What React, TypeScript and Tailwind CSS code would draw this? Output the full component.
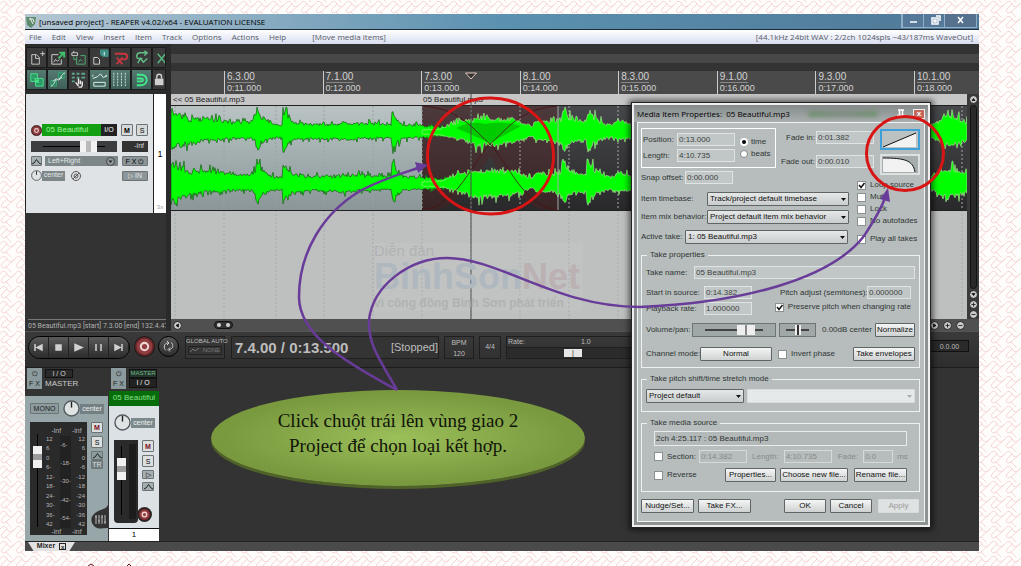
import React from 'react';
import { clsx } from 'clsx';

const MENU = ['File', 'Edit', 'View', 'Insert', 'Item', 'Track', 'Options', 'Actions', 'Help'];

const TICKS = [
  ['6.3.00', '0:11.000'],
  ['7.1.00', '0:12.000'],
  ['7.3.00', '0:13.000'],
  ['8.1.00', '0:14.000'],
  ['8.3.00', '0:15.000'],
  ['9.1.00', '0:16.000'],
  ['9.3.00', '0:17.000'],
  ['10.1.00', '0:18.000'],
];

// [x, height above centre, depth below centre] of the audio peaks
type Peak = [number, number, number];

const FIRST_ITEM: Peak[] = [
  [0, 24, 20], [8, 18, 15], [20, 13, 12], [34, 15, 9], [50, 12, 8], [62, 10, 7], [80, 11, 7], [84, 15, 10],
  [86, 25, 21], [90, 18, 12], [97, 9, 8], [109, 7, 6], [111, 8, 6], [112, 24, 21], [116, 18, 14], [122, 10, 9],
  [140, 8, 7], [166, 8, 8], [172, 10, 9], [192, 9, 7], [220, 8, 6], [222, 24, 22], [226, 14, 12], [232, 8, 7],
  [251, 7, 6], [290, 4, 3], [387, 2, 2],
];

const SECOND_ITEM: Peak[] = [
  [251, 2, 2], [270, 3, 3], [280, 8, 6], [292, 12, 9], [306, 14, 15], [320, 14, 14], [344, 14, 11], [354, 9, 7],
  [362, 6, 4], [366, 12, 9], [380, 10, 8], [390, 12, 12], [393, 24, 21], [398, 16, 12], [410, 10, 8], [415, 12, 9],
  [417, 24, 22], [422, 17, 13], [432, 9, 7], [441, 7, 6], [448, 13, 8], [460, 8, 6], [520, 9, 7], [620, 12, 10],
  [750, 7, 5], [762, 8, 6], [772, 14, 14], [782, 16, 14], [796, 11, 9],
];

function wavePath(peaks: Peak[], centre: number, seed: number) {
  let s = seed;
  const rand = () => {
    s = (s * 16807) % 2147483647;
    return s / 2147483647;
  };
  // mostly small ripple, with a taller hair now and then
  const ripple = () => 0.72 + 0.36 * rand() + (rand() > 0.86 ? 0.4 : 0);
  const top: string[] = [];
  const bottom: string[] = [];
  const end = peaks[peaks.length - 1][0];
  let k = 0;
  for (let x = peaks[0][0]; x <= end; x += 1) {
    while (k < peaks.length - 2 && peaks[k + 1][0] < x) k += 1;
    const [x0, u0, d0] = peaks[k];
    const [x1, u1, d1] = peaks[k + 1];
    const f = (x - x0) / (x1 - x0);
    const up = Math.min(25, (u0 + (u1 - u0) * f) * ripple());
    const down = Math.min(24, (d0 + (d1 - d0) * f) * ripple());
    top.push(`${x} ${(centre - up).toFixed(1)}`);
    bottom.unshift(`${x} ${(centre + down).toFixed(1)}`);
  }
  return `M${top.join('L')}L${bottom.join('L')}Z`;
}

const GRID = [4, 53, 105, 153, 202, 251, 300, 349, 398, 447, 496, 546, 595, 644, 693, 743, 791];

function Arrange() {
  return (
    <svg viewBox="0 0 796 225" preserveAspectRatio="none" className="block h-[225px] w-full">
      <defs>
        <linearGradient id="lightItem" x2="0" y2="1">
          <stop offset="0" stopColor="#b9c3c4" />
          <stop offset="1" stopColor="#8a9698" />
        </linearGradient>
        <linearGradient id="darkItem" x2="0" y2="1">
          <stop offset="0" stopColor="#47484b" />
          <stop offset="1" stopColor="#29292b" />
        </linearGradient>
      </defs>
      <rect width="796" height="225" fill="#bec0c0" />
      <rect width="796" height="12" fill="#c6c6c6" />
      <rect y="12" width="251" height="104" fill="url(#lightItem)" />
      <rect x="251" y="12" width="545" height="104" fill="url(#darkItem)" />
      {/* Crossfade shading */}
      <path
        d="M251 12H387V116H370C350 108 334 88 319 62C304 88 288 108 268 116H251Z"
        fill="#5a1c1c"
        opacity="0.32"
      />
      {GRID.map((x) => (
        <g key={x} strokeDasharray="2 2">
          <line x1={x} x2={x} y1="116" y2="225" stroke="#a6aaaa" />
          <line x1={x} x2={x} y1="12" y2="116" stroke={x > 251 ? '#a5a5a5' : '#98a2a3'} />
        </g>
      ))}
      <path d={wavePath(FIRST_ITEM, 38, 11)} fill="#00ff00" stroke="#1f6a1f" strokeWidth="0.8" />
      <path d={wavePath(FIRST_ITEM, 90, 29)} fill="#00ff00" stroke="#1f6a1f" strokeWidth="0.8" />
      <path d={wavePath(SECOND_ITEM, 38, 47)} fill="#00ff00" stroke="#b4e89a" strokeWidth="0.6" />
      <path d={wavePath(SECOND_ITEM, 90, 83)} fill="#00ff00" stroke="#b4e89a" strokeWidth="0.6" />
      <path d="M285 34Q300 26 314 30Q330 26 350 32L319 49Z" fill="#00a800" opacity="0.6" />
      <g fill="none" stroke="#4a1212" strokeWidth="0.8">
        <path d="M251 12C290 14 304 38 319 50C338 70 352 112 387 116" />
        <path d="M387 12C348 14 334 38 319 50C300 70 286 112 251 116" />
      </g>
      <line x1="387" x2="387" y1="12" y2="116" stroke="#a8a8a8" />
      <path d="M0 11.5H796M0 116.5H796" stroke="#222" />
      <line x1="300" x2="300" y1="0" y2="225" stroke="#4a4a4a" />
    </svg>
  );
}

const TOOL_ICONS: { on?: boolean; art: React.ReactNode }[] = [
  { art: <path d="M5 7h5l3 3v7H5zM14 6h5M16.500 3.500v5M9 7v4h4" stroke="#c9c9c9" /> },
  {
    art: (
      <>
        <path d="M4 7h7M4 7v10h10v-5M6 15l2-3 2 2 2-2" stroke="#d0d0d0" />
        <path d="M11 11l5-5M12 5h5v5" stroke="#3fc46b" strokeWidth="2" />
      </>
    ),
  },
  {
    art: (
      <>
        <path d="M3 5h6v3H3zM5 3v2" stroke="#c9c9c9" />
        <path d="M8 9v8h9V8h-5M10 15l2-3 2 2M8 12H5V9" stroke="#4fae74" />
      </>
    ),
  },
  {
    art: (
      <>
        <path d="M4 10h4l2 2v5H4z" stroke="#d0d0d0" />
        <path d="M11 2h8v7h-5l-3-2z" fill="#3f8f86" stroke="#3f8f86" />
        <path d="M15 4v4" stroke="#d8fff4" />
      </>
    ),
  },
  { art: <path d="M4 6h10c4 0 4 6 0 6h-3M6 10l6 7M12 10l-6 7" stroke="#c8373f" strokeWidth="2" /> },
  { art: <path d="M15 5H9c-5 0-5 6-2 6h4M13 3l3 2-3 3M6 16l3-5 3 4 4-4" stroke="#62bf88" strokeWidth="1.500" /> },
  { art: <path d="M5 6l9 11M14 5L5 16M14 5l5 11" stroke="#58b983" strokeWidth="1.500" /> },
  { on: true, art: <path d="M4 4h7v8H4zM9 9h8v8H9zM7 8l5 5M12 10v3H9" stroke="#4be38a" fill="#2b9a66" /> },
  {
    on: true,
    art: (
      <>
        <path d="M3 11h6v6H3zM11 3h6v6h-6z" stroke="#3aa877" fill="#2f8062" />
        <path d="M3 17C8 15 6 11 10 10S13 5 18 3M5 12l4-3M11 11l4-4" stroke="#e2efe9" />
      </>
    ),
  },
  {
    art: (
      <>
        <path d="M3 4h3M8 4h3M13 4h4M3 8h3M8 8h3M13 8h4M3 12h3" stroke="#5ca68a" strokeWidth="2" />
        <path d="M10 17l-3-4M10 9v6M12 11v4M14 12v4l-1 2h-3" stroke="#e8e8e8" strokeWidth="1.500" />
      </>
    ),
  },
  { on: true, art: <path d="M3 9l5-2 3-3 3 4 4-2M4 13h12v4H4zM3 5v2M17 5v2" stroke="#e2f4ee" /> },
  { on: true, art: <path d="M3 3v15M7 3v15M11 3v15M15 3v15" stroke="#cfe6de" strokeDasharray="2 1" /> },
  { on: true, art: <path d="M5 5h5a5 5 0 0 1 0 11H5M5 9h5a1.500 1.500 0 0 1 0 3H5" stroke="#42e88c" strokeWidth="2" /> },
  {
    art: (
      <>
        <rect x="2" y="9" width="9" height="7" fill="#cfcfcf" stroke="none" />
        <path d="M4 9V7a2.500 2.500 0 0 1 5 0v2" stroke="#cfcfcf" strokeWidth="1.500" />
      </>
    ),
  },
];

function Toolbar() {
  return (
    <div className="grid h-[50px] grid-cols-[repeat(6,21px)_14px] grid-rows-[21px_21px] gap-y-px overflow-hidden bg-[#2c2c2c] pt-[3px] pl-px">
      {TOOL_ICONS.map((tool, i) => (
        <button
          key={i}
          className={clsx(
            'overflow-hidden border border-[#1c1c1c]',
            tool.on ? 'bg-gradient-to-b from-[#557a72] to-[#3e5f58]' : 'bg-[#3a3a3a]',
          )}
        >
          <svg width="19" height="19" viewBox="0 0 20 20" fill="none">
            {tool.art}
          </svg>
        </button>
      ))}
    </div>
  );
}

function Chip({ children, className }: { children: React.ReactNode; className?: string }) {
  return (
    <button
      className={clsx(
        'flex items-center justify-center rounded-[1px] border border-[#6d7374] text-[7px] leading-none',
        className,
      )}
    >
      {children}
    </button>
  );
}

function EnvIcon() {
  return (
    <svg width="9" height="7" viewBox="0 0 9 7" fill="none" stroke="#1f2526">
      <path d="M0 6l2-1 2.500-3.500L7 5l2 1" />
    </svg>
  );
}

function RecIcon({ size }: { size: number }) {
  return (
    <svg width={size} height={size} viewBox="0 0 20 20">
      <circle cx="10" cy="10" r="9.500" fill="#6e2527" stroke="#1d1d1d" />
      <circle cx="10" cy="10" r="7.500" fill="#8f3f42" />
      <circle cx="10" cy="10" r="3.500" fill="none" stroke="#f0d5d0" strokeWidth="2" />
    </svg>
  );
}

function Knob({ size }: { size: number }) {
  return (
    <svg width={size} height={size} viewBox="0 0 18 18">
      <circle cx="9" cy="9" r="8" fill="#dfe3e4" stroke="#565d5f" strokeWidth="1.500" />
      <path d="M9 2v6" stroke="#222" strokeWidth="1.500" />
    </svg>
  );
}

function TrackPanel() {
  return (
    <div className="flex h-[119px] border-l border-[#222] bg-[#dfe3e5]">
      <div className="flex flex-1 flex-col gap-1 px-[5px] pt-[30px]">
        <div className="flex h-3 items-center">
          <RecIcon size={11} />
          <input
            aria-label="Track name"
            defaultValue="05 Beautiful"
            className="h-3 w-[59px] bg-[#12a012] pl-1 text-[8px] text-[#a8f0a0]"
          />
          <button className="h-3 w-4 bg-[#222] text-[7px] text-white">I/O</button>
          <Chip className="ml-1 h-3 w-3 bg-[#d5d8d8] font-bold">M</Chip>
          <Chip className="ml-[3px] h-3 w-3 bg-[#d5d8d8]">S</Chip>
        </div>
        <div className="flex h-3 items-center justify-between">
          <div className="flex h-[11px] w-[86px] items-center bg-[#3b3d3e] px-3">
            <div className="flex h-px w-full items-center justify-end bg-black pr-2">
              <div className="h-[11px] w-[17px] border-x-[6px] border-[#f2f2f2] bg-[#b9b9b9]" />
            </div>
          </div>
          <div className="flex h-[11px] w-[26px] items-center justify-end bg-[#333] pr-1 text-[7px] text-[#ddd]">
            -inf
          </div>
        </div>
        <div className="flex h-[10px] items-center">
          <Chip className="h-[10px] w-[11px] bg-[#a5aeb0]">
            <EnvIcon />
          </Chip>
          <div className="ml-[3px] flex h-[10px] w-[73px] items-center justify-between bg-[#7d8789] px-[3px] text-[7px] text-[#e3e8e8]">
            Left+Right
            <svg width="9" height="9" viewBox="0 0 9 9">
              <circle cx="4.500" cy="4.500" r="4" fill="#8f999b" stroke="#444" />
              <path d="M2.500 3.500h4l-2 2.500z" fill="#222" />
            </svg>
          </div>
          <Chip className="ml-1 h-[10px] w-[26px] bg-[#8c9698]">F X ⏻</Chip>
        </div>
        <div className="flex h-[11px] items-center">
          <Knob size={11} />
          <span className="flex h-[10px] w-[23px] items-center justify-center bg-[#7d8789] text-[7px] text-[#e3e8e8]">
            center
          </span>
          <svg width="10" height="10" viewBox="0 0 10 10" className="ml-[6px]" fill="none" stroke="#555">
            <circle cx="5" cy="5" r="4.500" />
            <circle cx="5" cy="5" r="2" />
            <path d="M2 8l6-6" />
          </svg>
          <Chip className="ml-[41px] h-[10px] w-[26px] bg-[#8c9698] text-[#e3e8e8]">▷ IN</Chip>
        </div>
      </div>
      <div className="flex w-[13px] flex-col items-center border-l border-[#222] bg-white pt-[54px] text-[9px] leading-3">
        1<span className="mt-auto text-[6px] text-[#999]">3x</span>
      </div>
    </div>
  );
}

function RoundButton({ d }: { d: string }) {
  return (
    <button className="block">
      <svg width="9" height="9" viewBox="0 0 9 9">
        <circle cx="4.500" cy="4.500" r="4" fill="#c9c9c9" stroke="#222" />
        <path d={d} fill="#111" stroke="#111" strokeWidth="0.8" />
      </svg>
    </button>
  );
}

function Timeline() {
  return (
    <section className="min-w-0 flex-1">
      <div className="h-[10px] bg-[#333]" />
      <div className="h-[9px] bg-[#484848]" />
      <div className="h-2 bg-[#333]" />
      <div className="relative grid h-[23px] grid-cols-[repeat(7,1fr)_65px] bg-[#4a4a4a] pl-[53px]">
        {TICKS.map(([beat, time]) => (
          <div key={beat} className="border-l border-[#ccc] pt-px pl-[2px] text-[#d2d2d2]">
            <div className="w-7 border-b border-[#888] text-[10px] leading-[10px] whitespace-nowrap">{beat}</div>
            <div className="text-[9px] leading-[10px]">{time}</div>
          </div>
        ))}
        <svg width="12" height="8" viewBox="0 0 12 8" className="absolute top-px left-[294px]" fill="#333" stroke="#e8c8c0">
          <path d="M.5 1h11L6 7z" />
        </svg>
      </div>
      <div className="flex bg-[#3a3a3a]">
        <div className="relative min-w-0 flex-1">
          <Arrange />
          <div className="absolute inset-x-0 top-0 flex text-[8px] leading-3 text-[#222]">
            <span className="w-[252px] pl-[2px]">&lt;&lt; 05 Beautiful.mp3</span>
            <span>05 Beautiful.mp3</span>
          </div>
          <div className="absolute top-[149px] left-[203px] w-[209px] bg-white/5 font-bold whitespace-nowrap text-[#b0b2b2]">
            <p className="text-[15px] leading-4 font-normal">Diễn đàn</p>
            <p className="text-[36px] leading-9 text-[#afb8be]">
              BinhSon<span className="text-[#bbb0b2]">Net</span>
            </p>
            <p className="text-[12px] leading-4">vì công đồng Bình Sơn phát triển</p>
          </div>
        </div>
        <div className="flex w-3 flex-col items-center gap-px pt-px">
          <RoundButton d="M3 5.500h3L4.500 3.500z" />
          <div className="w-[7px] flex-1 rounded-full border border-[#111] bg-[#292929]" />
          <RoundButton d="M3 3.500h3L4.500 5.500z" />
          <RoundButton d="M2.500 4.500h4M4.500 2.500v4" />
          <RoundButton d="M2.500 4.500h4" />
        </div>
      </div>
      <div className="flex h-3 items-center bg-[#505050] px-[2px]">
        <RoundButton d="M5.500 3v3L3 4.500z" />
        <div className="ml-8 flex h-2 w-[19px] items-center justify-around rounded-full border border-[#111] bg-[#333]">
          <i className="size-1 rounded-full bg-[#d5d5d5]" />
          <i className="size-1 rounded-full bg-[#d5d5d5]" />
        </div>
        <div className="mr-3 ml-auto flex gap-1">
          <RoundButton d="M3.500 3v3L6 4.500z" />
          <RoundButton d="M2.500 4.500h4M4.500 2.500v4" />
          <RoundButton d="M2.500 4.500h4" />
        </div>
      </div>
    </section>
  );
}

const TRANSPORT = [
  'M5 3v7M12 4v5L7 6.500z',
  'M6 4h5v5H6z',
  'M5 3.500v6L12 6.500z',
  'M6 3v7M11 3v7',
  'M12 3v7M5 4v5l5-2.500z',
];

function Transport() {
  return (
    <section className="flex h-9 items-start overflow-hidden border-t border-[#555] bg-gradient-to-b from-[#3a3a3a] to-[#2e2e2e] pt-1 pl-[3px] text-[#bdbdbd]">
      <div className="flex overflow-hidden rounded-full border border-black">
        {TRANSPORT.map((d) => (
          <button
            key={d}
            className="flex h-[21px] w-5 items-center justify-center border-r border-[#222] bg-gradient-to-b from-[#5a5a5a] to-[#2d2d2d]"
          >
            <svg width="17" height="13" viewBox="0 0 17 13" fill="#d0d0d0" stroke="#d0d0d0" strokeWidth="1.500">
              <path d={d} />
            </svg>
          </button>
        ))}
      </div>
      <button className="ml-1">
        <RecIcon size={21} />
      </button>
      <button className="ml-[3px] flex size-[21px] items-center justify-center rounded-full border border-black bg-gradient-to-b from-[#5a5a5a] to-[#2d2d2d]">
        <svg width="13" height="13" viewBox="0 0 13 13" fill="none" stroke="#d0d0d0">
          <path d="M4 10.500C1 8 2 3 6 3M9 2.500c3 2 2 7-2 7M5 1l2 2-2 2M8 7.500l-2 2 2 2" />
        </svg>
      </button>
      <div className="ml-[6px] h-[23px] w-10 shrink-0 border border-[#1f1f1f] bg-[#363636] text-center text-[6px] leading-[9px] whitespace-nowrap">
        GLOBAL AUTO
        <div className="mx-[2px] flex h-[9px] items-center justify-between border border-[#222] px-px text-[#777]">
          <svg width="9" height="5" viewBox="0 0 9 5" fill="none" stroke="#777">
            <path d="M0 4l3-3 2 2 4-3" />
          </svg>
          NONE
        </div>
      </div>
      <div className="ml-[6px] flex h-[23px] w-[208px] shrink-0 items-center justify-between border border-[#1f1f1f] bg-[#343434] pl-[3px]">
        <span className="text-[15px] leading-4 font-bold">7.4.00 / 0:13.500</span>
        <span className="text-[11px]">[Stopped]</span>
      </div>
      <div className="ml-[5px] h-[23px] w-[30px] shrink-0 border border-[#1f1f1f] text-center text-[7px] leading-[11px]">
        BPM
        <br />
        120
      </div>
      <div className="ml-[5px] h-[23px] w-[22px] shrink-0 border border-[#1f1f1f] text-center text-[7px] leading-5">4/4</div>
      <div className="ml-[5px] h-[23px] w-[155px] shrink-0 border border-[#1f1f1f] text-[7px] leading-[10px]">
        <div className="flex">
          <span className="w-[74px] pl-px">Rate:</span>
          <span>1.0</span>
        </div>
        <div className="flex h-[11px] items-center border-t border-[#1f1f1f] bg-[#2b2b2b] pl-[57px]">
          <div className="h-2 w-[18px] bg-[#e6e6e6] text-center text-[7px] leading-[7px] text-[#222]">|</div>
        </div>
      </div>
      <div className="mt-1 mr-[10px] ml-auto h-3 w-[39px] border border-[#111] bg-[#2a2a2a] text-center text-[7px] leading-[11px]">
        0.0.00
      </div>
    </section>
  );
}

function Fader({ className }: { className: string }) {
  return (
    <div className={clsx('flex w-[10px] flex-col items-center', className)}>
      <div className="h-3 w-px bg-black" />
      <div className="h-[22px] w-[9px] shrink-0 border-y-8 border-[#f0f0f0] bg-[#9b9b9b]" />
      <div className="w-px flex-1 bg-black" />
    </div>
  );
}

function FxButton() {
  return (
    <button className="h-[21px] w-[15px] bg-[#8b9a9d] text-[7px] leading-[10px] text-[#222]">
      ⏻<br />F X
    </button>
  );
}

function Mixer() {
  const side = ['12', '6', '0', '6-', '12-', '18-', '24-', '30-', '36-', '42'];
  return (
    <section className="flex h-[174px] border-t border-[#1c1c1c] bg-[#333]">
      <div className="flex w-[83px] flex-col">
        <div className="flex h-7 gap-[3px] pl-[2px]">
          <FxButton />
          <div className="pt-px text-[8px] leading-3 text-[#ccc]">
            <button className="block h-[9px] w-7 border border-[#111] bg-[#2a2a2a] text-[7px] leading-[7px]">I / O</button>
            MASTER
          </div>
        </div>
        <div className="flex flex-1 flex-col bg-[#97a6a9] pt-[4px] pl-[5px]">
          <div className="flex items-center">
            <Chip className="h-[11px] w-[29px] bg-[#8c9b9e] text-[#222]">MONO</Chip>
            <span className="ml-1">
              <Knob size={17} />
            </span>
            <span className="h-[10px] w-6 bg-[#728083] text-center text-[7px] leading-[10px] text-[#eee]">center</span>
          </div>
          <div className="mt-[5px] flex">
            <div className="flex h-[113px] w-[57px] bg-[#2a2a2a] text-[6px] text-[#b5b5b5]">
              <Fader className="ml-[2px] pt-3 pb-2" />
              <div className="ml-1 flex flex-1 flex-col pt-1 leading-[10px]">
                <div className="flex justify-around text-[7px]">
                  <span>-inf</span>
                  <span>-inf</span>
                </div>
                <div className="flex flex-1 justify-between pr-[2px]">
                  <div className="flex flex-col justify-between leading-[7px]">
                    {side.map((n) => (
                      <span key={n}>{n}</span>
                    ))}
                  </div>
                  <div className="flex flex-col justify-around bg-[#222] leading-[7px]">
                    {['-6-', '-18-', '-30-', '-42-', '-54-'].map((n) => (
                      <span key={n}>{n}</span>
                    ))}
                  </div>
                  <div className="flex flex-col justify-between text-right leading-[7px]">
                    {side.map((n) => (
                      <span key={n}>{n.includes('-') ? `-${n.slice(0, -1)}` : n}</span>
                    ))}
                  </div>
                </div>
                <div className="flex justify-around text-[7px] leading-[7px]">
                  <span>-inf</span>
                  <span>-inf</span>
                </div>
              </div>
            </div>
            <div className="ml-1 flex flex-col gap-[3px]">
              <Chip className="h-[11px] w-3 bg-[#dcdfdf] font-bold text-[#7a1020]">M</Chip>
              <Chip className="h-3 w-3 bg-[#dcdfdf]">S</Chip>
              <div>
                <Chip className="h-[9px] w-3 bg-[#8c9b9e]">
                  <EnvIcon />
                </Chip>
                <Chip className="h-[9px] w-3 bg-[#728083] text-[#ddd]">TR</Chip>
              </div>
              <svg width="17" height="25" viewBox="0 0 17 25" className="mt-[33px]">
                <path d="M17 0C15 5 8 4 3 9a8 8 0 0 0 0 12c4 4 9 2 14 2z" fill="#333" />
                <path d="M5 10v9M8 10v9M11 10v9M14 10v9M4 12h2M7 16h2M10 12h2M13 17h2" stroke="#bbb" />
              </svg>
            </div>
          </div>
        </div>
      </div>
      <div className="ml-px flex w-[50px] flex-col">
        <div className="flex h-[23px] justify-between pr-[2px] pl-[2px]">
          <FxButton />
          <div className="pt-px text-[7px] leading-[8px]">
            <button className="block h-[9px] w-7 border border-[#111] bg-[#24332a] text-[6px] leading-[7px] text-[#6fb58c]">
              MASTER
            </button>
            <button className="block h-[10px] w-7 border border-[#111] bg-[#222] text-[#eee]">I / O</button>
          </div>
        </div>
        <div className="h-[15px] bg-[#076d0b] text-center text-[8px] leading-[13px] whitespace-nowrap text-[#8ae08a]">
          05 Beautiful
        </div>
        <div className="flex-1 bg-[#dbe1e4] pt-2 pl-[5px]">
          <div className="flex items-center">
            <Knob size={17} />
            <span className="h-[10px] w-6 bg-[#7d8a8d] text-center text-[7px] leading-[10px] text-[#eee]">center</span>
          </div>
          <div className="mt-[9px] flex">
            <div className="flex h-[83px] w-6 justify-between rounded-b-sm bg-[#2a2a2a] px-[2px]">
              <Fader className="pt-[6px] pb-2" />
              <div className="my-1 w-[7px] bg-[#1c1c1c]" />
            </div>
            <div className="ml-[4px] flex flex-col items-center gap-[3px]">
              <Chip className="h-3 w-3 bg-[#dcdfdf] font-bold text-[#7a1020]">M</Chip>
              <Chip className="h-3 w-3 bg-[#dcdfdf]">S</Chip>
              <Chip className="h-[9px] w-3 bg-[#a5aeb0]">▷</Chip>
              <Chip className="h-[9px] w-3 bg-[#a5aeb0]">
                <EnvIcon />
              </Chip>
              <span className="mt-[13px] -ml-2 rounded-full bg-[#2a2a2a] p-px">
                <RecIcon size={13} />
              </span>
            </div>
          </div>
        </div>
        <div className="h-[13px] border-t border-[#111] bg-white text-center text-[8px] leading-3">1</div>
      </div>
    </section>
  );
}

function Field({ label, value, className, gap = 'w-[60px]' }: { label: string; value: string; className: string; gap?: string }) {
  return (
    <label className="flex items-center">
      <span className={clsx('shrink-0 whitespace-nowrap', gap)}>{label}</span>
      <input
        defaultValue={value}
        className={clsx('h-[13px] border border-[#dfe3e3] bg-[#c1c7c6] px-px text-[8px] text-[#3c4141]', className)}
      />
    </label>
  );
}

function Check({ label, checked }: { label: string; checked?: boolean }) {
  return (
    <label className="flex items-center gap-1 whitespace-nowrap">
      <span className="relative size-[9px]">
        <input
          type="checkbox"
          defaultChecked={checked}
          className="peer block size-[9px] appearance-none border border-[#8b9090] bg-white"
        />
        <svg
          width="9"
          height="9"
          viewBox="0 0 9 9"
          className="pointer-events-none absolute inset-0 hidden peer-checked:block"
          fill="none"
          stroke="#111"
          strokeWidth="1.500"
        >
          <path d="M2 4l2 2.500L7.500 2" />
        </svg>
      </span>
      {label}
    </label>
  );
}

function Select({ value, className, label, disabled }: { value: string; className: string; label: string; disabled?: boolean }) {
  return (
    <span className={clsx('relative block', className)}>
      <select
        aria-label={label}
        disabled={disabled}
        className={clsx(
          'block h-[14px] w-full appearance-none rounded-[1px] border px-[2px] text-[8px]',
          disabled ? 'border-[#d8dcdc] bg-[#e6e9e9]' : 'border-[#5f6565] bg-gradient-to-b from-[#e6e8e8] to-[#c9cdcd] text-[#111]',
        )}
      >
        <option>{value}</option>
      </select>
      <svg width="5" height="3" viewBox="0 0 5 3" className="pointer-events-none absolute top-[6px] right-[3px]">
        <path d="M0 0h5L2.500 3z" fill={disabled ? '#aaa' : '#111'} />
      </svg>
    </span>
  );
}

function Btn({ children, className, disabled }: { children: React.ReactNode; className: string; disabled?: boolean }) {
  return (
    <button
      disabled={disabled}
      className={clsx(
        'h-[14px] rounded-[1px] border text-center text-[8px] leading-3 whitespace-nowrap',
        disabled
          ? 'border-[#d8dcdc] bg-[#dfe2e2] text-[#999]'
          : 'border-[#5f6565] bg-gradient-to-b from-[#f4f5f5] to-[#cfd2d2] text-[#111]',
        className,
      )}
    >
      {children}
    </button>
  );
}

function Group({ title, children, className }: { title: string; children: React.ReactNode; className: string }) {
  return (
    <fieldset className={clsx('border border-[#eef1f1] px-[4px]', className)}>
      <legend className="ml-px px-[3px] leading-[10px]">{title}</legend>
      {children}
    </fieldset>
  );
}

function PropertiesDialog() {
  return (
    <section className="absolute top-[89px] right-[49px] w-[298px] border-2 border-[#efefef] bg-[#8d9393] pb-[3px] shadow-[0_0_6px_3px_rgba(0,0,0,0.6)] outline outline-[#222]">
      <header className="flex h-[17px] items-center bg-gradient-to-b from-[#858989] to-[#a9afaf] pr-[3px] pl-[3px]">
        <h2 className="font-['Open_Sans'] text-[8px] whitespace-pre text-black">
          {'Media Item Properties:  05 Beautiful.mp3'}
        </h2>
        <div className="mx-auto h-[6px] w-[70px] rounded-full bg-gradient-to-r from-[#4f8a50] via-[#6f7f70] to-[#4f8a50] opacity-60 blur-[2px]" />
        <svg width="8" height="9" viewBox="0 0 8 9" stroke="white" strokeWidth="1.500" fill="none">
          <path d="M1 1h6M2.500 1v5M5.500 1v5M0 6.500h8" />
        </svg>
        <button className="ml-2 h-[10px] w-3 border border-[#eee] bg-[#c4685b] text-[8px] leading-[7px] font-bold text-white">
          x
        </button>
      </header>
      <form className="mx-[3px] border border-[#f2f4f4] bg-[#b6bdbc] pt-[5px] pr-[4px] pb-[8px] pl-[3px] text-[8px] leading-[10px] text-[#303535]">
        <div className="flex h-[52px]">
          <div>
            <div className="flex h-10 w-[135px] border border-white pt-1 pl-px">
              <div className="flex flex-col gap-[3px]">
                <Field label="Position:" value="0:13.000" gap="w-[34px]" className="w-[58px]" />
                <Field label="Length:" value="4:10.735" gap="w-[34px]" className="w-[58px]" />
              </div>
              <div className="flex flex-col gap-[2px] pt-1 pl-[5px]">
                {['time', 'beats'].map((unit) => (
                  <label key={unit} className="flex items-center gap-[3px]">
                    <input
                      type="radio"
                      name="unit"
                      defaultChecked={unit === 'time'}
                      className="size-2 appearance-none rounded-full border border-[#888] bg-white checked:border-2 checked:border-white checked:bg-black"
                    />
                    {unit}
                  </label>
                ))}
              </div>
            </div>
            <div className="mt-[3px]">
              <Field label="Snap offset:" value="0:00.000" gap="w-[44px]" className="w-12" />
            </div>
          </div>
          <div className="ml-[5px] flex flex-col items-end gap-[11px] pt-[3px]">
            <Field label="Fade in:" value="0:01.382" gap="w-[30px]" className="w-[58px]" />
            <Field label="Fade out:" value="0:00.010" gap="w-[35px]" className="w-[58px]" />
          </div>
          <div className="ml-auto flex flex-col gap-1 pt-px">
            <button type="button" className="h-[21px] w-10 border-2 border-[#3f9fd8] bg-[#bcc2c2]">
              <svg width="36" height="17" viewBox="0 0 36 17">
                <path d="M1 16L34 2v14z" fill="#f2f2f2" />
                <path d="M1 16L34 2" stroke="#111" />
              </svg>
            </button>
            <button type="button" className="h-[21px] w-10 border-2 border-[#dde0e0] bg-[#a6adad]">
              <svg width="36" height="17" viewBox="0 0 36 17">
                <path d="M1 2C22 2 31 4 33 16H1z" fill="#f2f2f2" />
                <path d="M1 2C22 2 31 4 33 16" stroke="#111" fill="none" />
              </svg>
            </button>
          </div>
        </div>
        <div className="flex justify-between">
          <div className="pt-3">
            <div className="flex items-center">
              <span className="w-[66px]">Item timebase:</span>
              <Select label="Item timebase" value="Track/project default timebase" className="w-[142px]" />
            </div>
            <div className="mt-1 flex items-center">
              <span className="w-[66px] whitespace-nowrap">Item mix behavior:</span>
              <Select label="Item mix behavior" value="Project default item mix behavior" className="w-[142px]" />
            </div>
            <div className="mt-[6px] flex items-center">
              <span className="w-[44px]">Active take:</span>
              <Select label="Active take" value="1: 05 Beautiful.mp3" className="w-[163px]" />
            </div>
          </div>
          <div className="flex w-[63px] flex-col gap-[2px]">
            <Check label="Loop source" checked />
            <Check label="Mute" />
            <Check label="Lock" />
            <Check label="No autofades" />
            <div className="mt-[6px]">
              <Check label="Play all takes" />
            </div>
          </div>
        </div>
        <Group title="Take properties" className="mt-[6px] h-[118px]">
          <div className="mt-[6px]">
            <Field label="Take name:" value="05 Beautiful.mp3" gap="w-12" className="w-[221px]" />
          </div>
          <div className="mt-[7px] flex justify-between pr-[4px]">
            <div className="flex flex-col gap-[3px]">
              <Field label="Start in source:" value="0:14.382" gap="w-[58px]" className="w-12" />
              <Field label="Playback rate:" value="1.000000" gap="w-[58px]" className="w-12" />
            </div>
            <div className="flex flex-col items-end gap-[3px]">
              <Field label="Pitch adjust (semitones):" value="0.000000" gap="w-[87px]" className="w-11" />
              <Check label="Preserve pitch when changing rate" checked />
            </div>
          </div>
          <div className="mt-2 flex items-center">
            <span className="w-[46px] shrink-0">Volume/pan:</span>
            <div className="flex h-[14px] w-[84px] shrink-0 items-center border border-[#6d7474] bg-[#a0a7a7] px-3">
              <div className="flex h-[2px] w-full items-center justify-end bg-[#444] pr-2">
                <div className="h-[10px] w-[18px] border-x-8 border-[#eee] bg-[#888]" />
              </div>
            </div>
            <div className="ml-[3px] flex h-[14px] w-[37px] shrink-0 items-center border border-[#6d7474] bg-[#a0a7a7] px-[6px]">
              <div className="flex h-[2px] w-full items-center justify-center bg-[#444]">
                <div className="h-[10px] w-[6px] border-x-2 border-[#eee] bg-[#333]" />
              </div>
            </div>
            <span className="ml-[6px] whitespace-nowrap">0.00dB center</span>
            <Btn className="ml-auto w-10">Normalize</Btn>
          </div>
          <div className="mt-[10px] flex items-center">
            <span className="w-[54px] whitespace-nowrap">Channel mode:</span>
            <Btn className="mr-[6px] w-[72px]">Normal</Btn>
            <Check label="Invert phase" />
            <Btn className="ml-auto w-[62px]">Take envelopes</Btn>
          </div>
        </Group>
        <Group title="Take pitch shift/time stretch mode" className="mt-[6px] h-[38px]">
          <div className="mt-[5px] flex gap-[3px]">
            <Select label="Stretch mode" value="Project default" className="w-[98px]" />
            <Select label="Stretch parameter" value="" className="flex-1" disabled />
          </div>
        </Group>
        <Group title="Take media source" className="mt-[6px] h-[74px]">
          <input
            aria-label="Media source"
            readOnly
            value="2ch 4:25.117 : 05 Beautiful.mp3"
            className="mt-[3px] ml-2 h-[15px] w-[253px] border border-[#e8ebeb] bg-[#b3b9b8] px-px text-[8px]"
          />
          <div className="mt-1 ml-2 flex items-center text-[#858b8b]">
            <span className="w-[45px] text-[#303535]">
              <Check label="Section:" />
            </span>
            <input aria-label="Section start" disabled defaultValue="0:14.382" className="h-[13px] w-12 border border-[#d4d9d9] px-px" />
            <span className="mr-[5px] ml-[5px]">Length:</span>
            <input aria-label="Section length" disabled defaultValue="4:10.735" className="h-[13px] w-12 border border-[#d4d9d9] px-px" />
            <span className="mr-[5px] ml-[6px]">Fade:</span>
            <input aria-label="Section fade" disabled defaultValue="0.0" className="h-[13px] w-[30px] border border-[#d4d9d9] px-px" />
            <span className="ml-1">ms</span>
          </div>
          <div className="mt-[5px] ml-2 flex items-center">
            <span className="w-[71px]">
              <Check label="Reverse" />
            </span>
            <Btn className="w-[51px]">Properties...</Btn>
            <Btn className="ml-1 w-[68px]">Choose new file...</Btn>
            <Btn className="ml-[6px] w-[53px]">Rename file...</Btn>
          </div>
        </Group>
        <div className="mt-[7px] flex">
          <Btn className="w-[53px]">Nudge/Set...</Btn>
          <Btn className="ml-1 w-[53px]">Take FX...</Btn>
          <Btn className="mr-1 ml-auto w-[42px]">OK</Btn>
          <Btn className="mr-[6px] w-[42px]">Cancel</Btn>
          <Btn className="mr-px w-[41px]" disabled>
            Apply
          </Btn>
        </div>
      </form>
    </section>
  );
}

// Hand-drawn callouts that sit over the whole window
function Callouts() {
  return (
    <svg
      width="954"
      height="537"
      viewBox="25 14 954 537"
      fill="none"
      className="pointer-events-none absolute top-0 left-0"
    >
      <g stroke="#d91414" strokeWidth="3">
        <ellipse cx="490.500" cy="156" rx="63" ry="58" />
        <ellipse cx="905" cy="153.500" rx="38.500" ry="37" />
      </g>
      <g stroke="#683c98" strokeWidth="2.500">
        <path d="M397 390C345 362 299 335 299 297C299 250 325 212 360 191C380 180 400 174 418 168" />
        <path d="M397 390C380 360 368 345 369 320C373 285 410 258 447 258C500 258 555 307 640 307C740 303 830 280 864 236C873 222 880 212 885 198" />
      </g>
      <g fill="#683c98">
        <path d="M428 165L415 162L418 173Z" />
        <path d="M888 188L880 199L890 202Z" />
      </g>
    </svg>
  );
}

function Wallpaper() {
  return (
    <svg className="absolute inset-0 size-full">
      <defs>
        <pattern id="hearts" width="15" height="15" patternUnits="userSpaceOnUse" fill="none" strokeLinecap="round">
          <rect width="15" height="15" fill="#fffdfb" />
          <path d="M0 4C2 0 6 1 7 4S12 8 15 4M7 4L2 9C0 12 3 14 6 12L15 4M6 12L9 15M9 0L11 2" stroke="#f5d6d6" />
        </pattern>
      </defs>
      <rect width="100%" height="100%" fill="url(#hearts)" />
      <path d="M88 566l3-2 3 2M127 566l2-2 2 2" stroke="#6b1010" fill="none" />
    </svg>
  );
}

export default function App() {
  return (
    <main className="relative min-h-screen overflow-hidden pt-[14px] pr-[42px] pb-[15px] pl-[25px] font-['Liberation_Sans',sans-serif]">
      <Wallpaper />
      <div className="relative bg-[#333]">
        <header className="flex h-4 items-center border-b border-[#1c2b38] bg-gradient-to-r from-[#b4c6d2] via-[#5b91b0] to-[#4f7896]">
          <svg width="10" height="12" viewBox="0 0 10 12" className="ml-px">
            <path d="M0 1h10l-1 7-4 4-4-3z" fill="#5d8b6c" />
            <path d="M4 2l3 6M3 3h4l1 3" stroke="#eee" fill="none" />
          </svg>
          <h1 className="ml-[3px] font-['Open_Sans'] text-[8px] whitespace-nowrap text-black">
            [unsaved project] - REAPER v4.02/x64 - EVALUATION LICENSE
          </h1>
          <div className="mr-[2px] ml-auto flex h-[14px] self-start border border-t-0 border-[#8fb0c8]">
            {['M5 8h7', 'M6 4h6v6H6zM8 6h2v2H8zM10 2h4v5', 'M6 3l5 6M11 3l-5 6'].map((d) => (
              <button key={d} className="flex w-[21px] justify-center border-l border-[#8fb0c8] bg-[#56799a] last:w-8 last:bg-[#55718e]">
                <svg width="17" height="12" viewBox="0 0 17 12" fill="none" stroke="white" strokeWidth="1.500">
                  <path d={d} />
                </svg>
              </button>
            ))}
          </div>
        </header>
        <nav className="flex h-[14px] items-center gap-[10px] bg-gradient-to-b from-white to-[#d9def0] pr-[6px] pl-1 font-['Open_Sans'] text-[8px] whitespace-nowrap text-[#555b66]">
          {MENU.map((name) => (
            <button key={name}>{name}</button>
          ))}
          <span className="ml-4">[Move media items]</span>
          <span className="ml-auto">[44.1kHz 24bit WAV : 2/2ch 1024spls ~43/187ms WaveOut]</span>
        </nav>
        <div className="flex">
          <aside className="flex w-[141px] flex-col">
            <Toolbar />
            <TrackPanel />
            <p className="mt-auto ml-[3px] h-3 border-t border-[#777] font-['Roboto'] text-[7px] leading-3 whitespace-nowrap text-[#b0b0b0]">
              05 Beautiful.mp3 [start] 7.3.00 [end] 132.4.47 [
            </p>
          </aside>
          <div className="w-[5px] bg-[#2a2a2a]" />
          <Timeline />
        </div>
        <Transport />
        <Mixer />
        <footer className="flex h-[10px] border-t border-[#222] bg-[#4a4a4a] pl-[3px]">
          <div className="flex h-[9px] w-[47px] items-center justify-center gap-1 bg-[#e2e2e2] text-[7px] font-bold text-[#222] [clip-path:polygon(0_0,100%_0,88%_100%,12%_100%)]">
            Mixer
            <button className="size-[7px] border border-[#222] text-[6px] leading-[4px]">x</button>
          </div>
        </footer>
        <PropertiesDialog />
        <div className="absolute top-[376px] left-[186px] flex h-[96px] w-[374px] items-center justify-center rounded-[50%] bg-[radial-gradient(ellipse_at_center,#9bbf59_0%,#7a9a3f_65%,#759339_100%)] pb-[10px] text-center font-['Liberation_Serif'] text-[19px] leading-[25px] text-[#101408] shadow-[0_3px_0_#4f6228]">
          <p>
            Click chuột trái lên vùng giao 2
            <br />
            Project để chọn loại kết hợp.
          </p>
        </div>
        <Callouts />
      </div>
    </main>
  );
}
